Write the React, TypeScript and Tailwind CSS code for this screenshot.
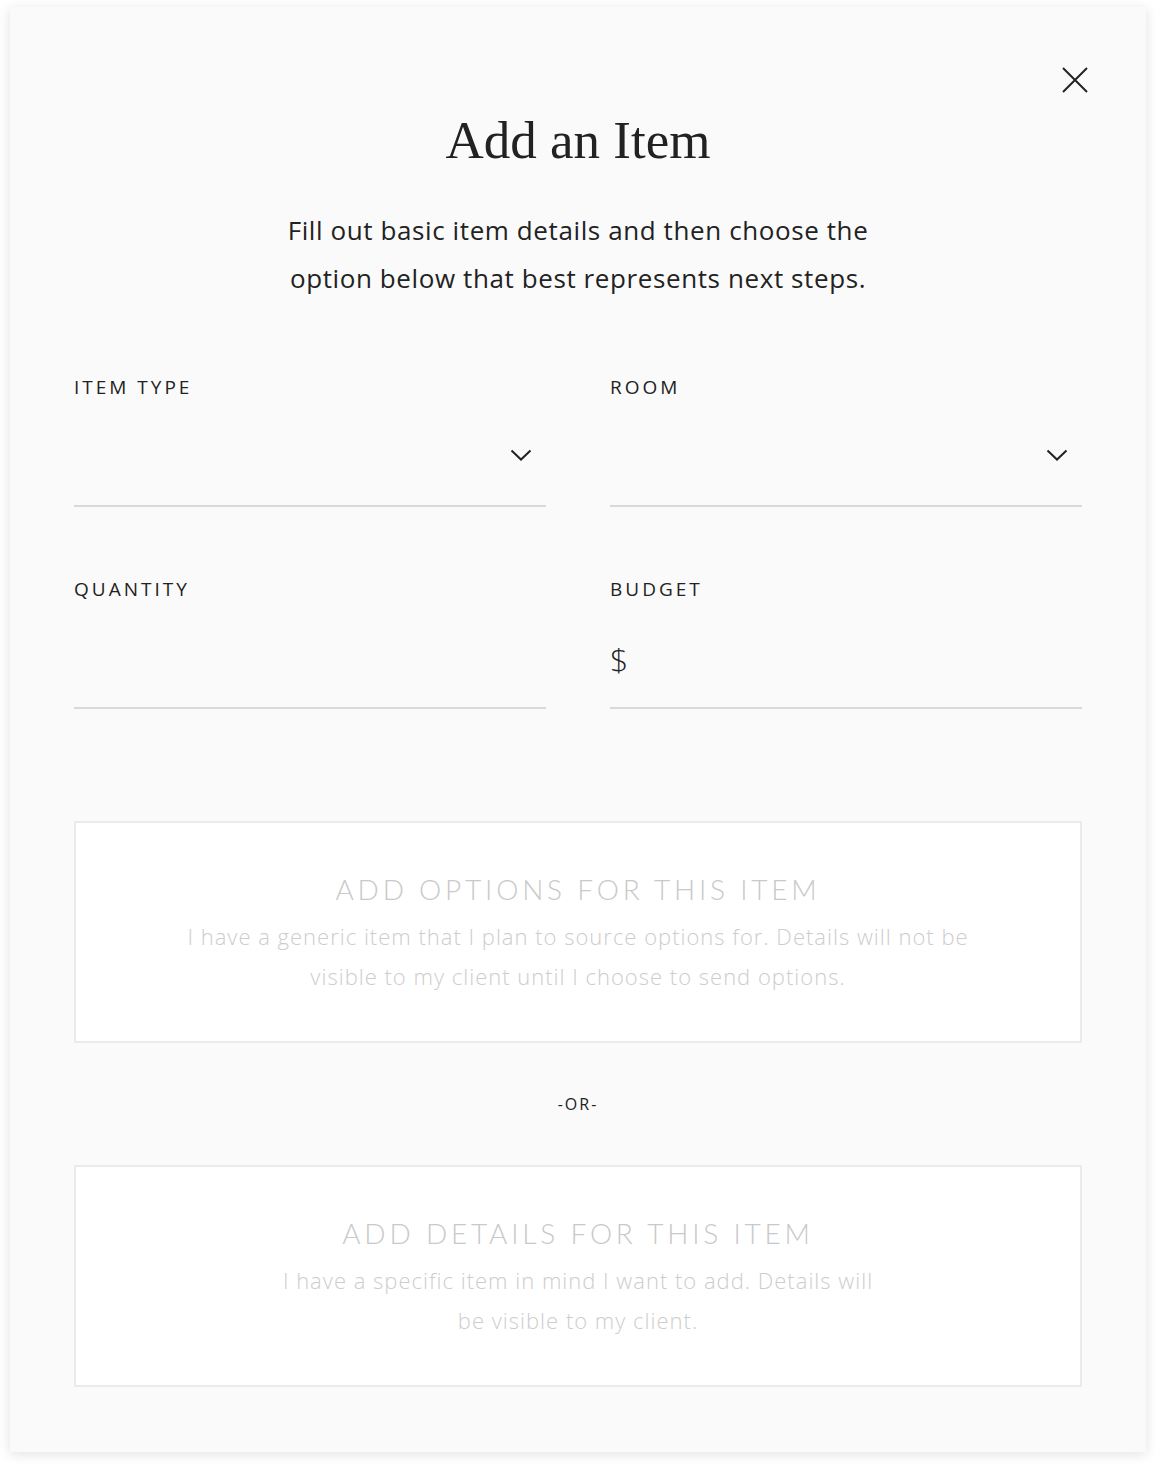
import React from "react";

const lato = { fontFamily: "Lato, 'Noto Sans', sans-serif" };
const open = { fontFamily: "'Open Sans', 'Noto Sans', sans-serif" };

function Chevron() {
  return (
    <svg width="22" height="14" viewBox="0 0 22 14" fill="none" stroke="#222" strokeWidth="2">
      <path d="M1.5 2.5 L11 11.5 L20.5 2.5" />
    </svg>
  );
}

function Field({ label, select, prefix }: { label: string; select?: boolean; prefix?: string }) {
  return (
    <div className="flex flex-col">
      <div className="text-[19px] leading-[24px] tracking-[3px] text-[#222]" style={open}>
        {label}
      </div>
      <div className="relative mt-[32px] h-[76px] border-b-2 border-[#d9d9d9]">
        {prefix && (
          <span className="absolute left-0 top-[6px] text-[32px] leading-[40px] text-[#222] font-light" style={open}>
            {prefix}
          </span>
        )}
        {select && (
          <span className="absolute right-[14px] top-[17px]">
            <Chevron />
          </span>
        )}
      </div>
    </div>
  );
}

function OptionBox({ title, lines }: { title: string; lines: string[] }) {
  return (
    <div className="h-[222px] bg-white border-2 border-[#ebebeb] flex flex-col items-center justify-center text-center">
      <div className="mt-[2px] text-[28px] leading-[36px] tracking-[3.8px] text-[#c9c9c9] font-light" style={lato}>
        {title}
      </div>
      <div className="mt-[9px] text-[22px] leading-[40px] tracking-[1px] text-[#cdcdcd] font-light" style={open}>
        {lines.map((l, i) => (
          <div key={i}>{l}</div>
        ))}
      </div>
    </div>
  );
}

export default function App() {
  return (
    <div className="min-h-[1464px] bg-white pt-[7px] px-[10px]">
      <div className="relative bg-[#fafafa] h-[1445px] shadow-[0_2px_12px_rgba(0,0,0,0.12)] px-[64px] pt-[101px]">
        <button className="absolute right-[58px] top-[60px]" aria-label="Close">
          <svg width="26" height="26" viewBox="0 0 26 26" stroke="#222" strokeWidth="2">
            <path d="M1 1 L25 25 M25 1 L1 25" />
          </svg>
        </button>
        <h1
          className="text-center text-[53px] leading-[64px] text-[#222]"
          style={{ fontFamily: "'Liberation Serif', 'DejaVu Serif', serif" }}
        >
          Add an Item
        </h1>
        <p className="mt-[34px] text-center text-[26px] leading-[48px] tracking-[0.6px] text-[#222]" style={open}>
          Fill out basic item details and then choose the
          <br />
          option below that best represents next steps.
        </p>
        <div className="mt-[73px] grid grid-cols-2 gap-x-[64px] gap-y-[70px]">
          <Field label="ITEM TYPE" select />
          <Field label="ROOM" select />
          <Field label="QUANTITY" />
          <Field label="BUDGET" prefix="$" />
        </div>
        <div className="mt-[112px]">
          <OptionBox
            title="ADD OPTIONS FOR THIS ITEM"
            lines={[
              "I have a generic item that I plan to source options for. Details will not be",
              "visible to my client until I choose to send options.",
            ]}
          />
          <div className="h-[122px] flex items-center justify-center text-[16px] tracking-[2px] text-[#222]" style={open}>
            -OR-
          </div>
          <OptionBox
            title="ADD DETAILS FOR THIS ITEM"
            lines={[
              "I have a specific item in mind I want to add. Details will",
              "be visible to my client.",
            ]}
          />
        </div>
      </div>
    </div>
  );
}
